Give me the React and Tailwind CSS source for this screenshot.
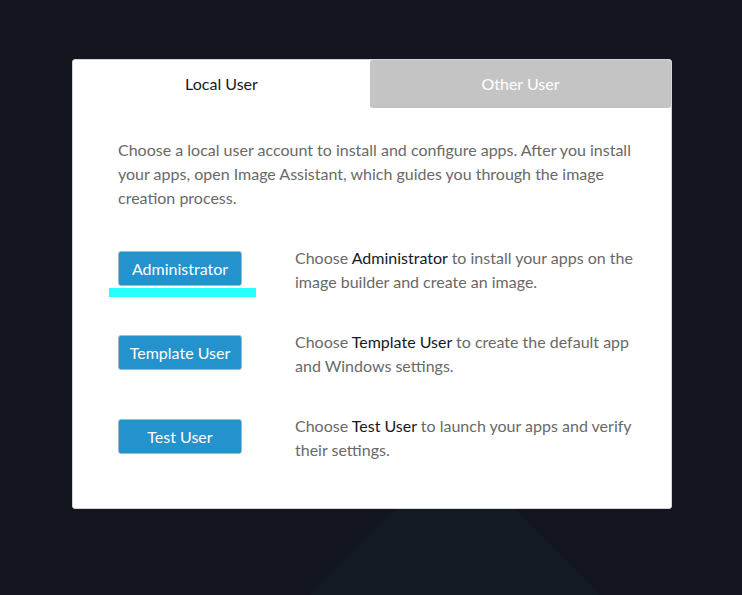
import React, { useState } from 'react';

const roles = [
  { label: 'Administrator', bold: 'Administrator', rest: ' to install your apps on the image builder and create an image.' },
  { label: 'Template User', bold: 'Template User', rest: ' to create the default app and Windows settings.' },
  { label: 'Test User', bold: 'Test User', rest: ' to launch your apps and verify their settings.' },
];

const App = () => {
  const [tab, setTab] = useState('local');

  return (
    <div className="relative w-full h-[595px] bg-[#13161e] overflow-hidden font-['Lato','Open_Sans',sans-serif]">
      {/* faint backdrop shape */}
      <svg className="absolute inset-0 w-full h-full pointer-events-none" viewBox="0 0 742 595">
        <polygon points="455,450 700,695 210,695" fill="#141a21" />
      </svg>

      <div className="relative pt-[59px] pl-[72px]">
        <div className="w-[600px] h-[450px] bg-white border border-[#d5d5d5] rounded-[3px] flex flex-col">
          <div className="flex h-[48px]">
            <button
              type="button"
              onClick={() => setTab('local')}
              className="w-[297px] flex items-center justify-center text-[16px] text-[#16191f]"
            >
              Local User
            </button>
            <button
              type="button"
              onClick={() => setTab('other')}
              className="flex-1 flex items-center justify-center text-[16px] text-white bg-[#c4c4c4] rounded-[3px]"
            >
              Other User
            </button>
          </div>

          <div className="pl-[45px] pt-[30px]">
            <p className="w-[520px] text-[16px] leading-[24px] text-[#696969]">
              Choose a local user account to install and configure apps. After you install your apps, open Image Assistant, which guides you through the image creation process.
            </p>

            <div className="mt-[36px] flex flex-col gap-[36px]">
              {roles.map((r, i) => (
                <div key={r.label} className="flex items-start">
                  <div className="relative w-[177px] pt-[5px]">
                    <button
                      type="button"
                      className="w-[124px] h-[35px] bg-[#2492cc] border border-[#aab7c4] rounded-[3px] text-white text-[16px] flex items-center justify-center"
                    >
                      {r.label}
                    </button>
                    {i === 0 && (
                      <div className="absolute left-[-9px] top-[42px] w-[147px] h-[9px] bg-[#25ffff]" />
                    )}
                  </div>
                  <p className="w-[345px] text-[16px] leading-[24px] text-[#696969]">
                    Choose <span className="text-[#16191f]">{r.bold}</span>
                    {r.rest}
                  </p>
                </div>
              ))}
            </div>
          </div>
        </div>
      </div>
    </div>
  );
};

export default App;
